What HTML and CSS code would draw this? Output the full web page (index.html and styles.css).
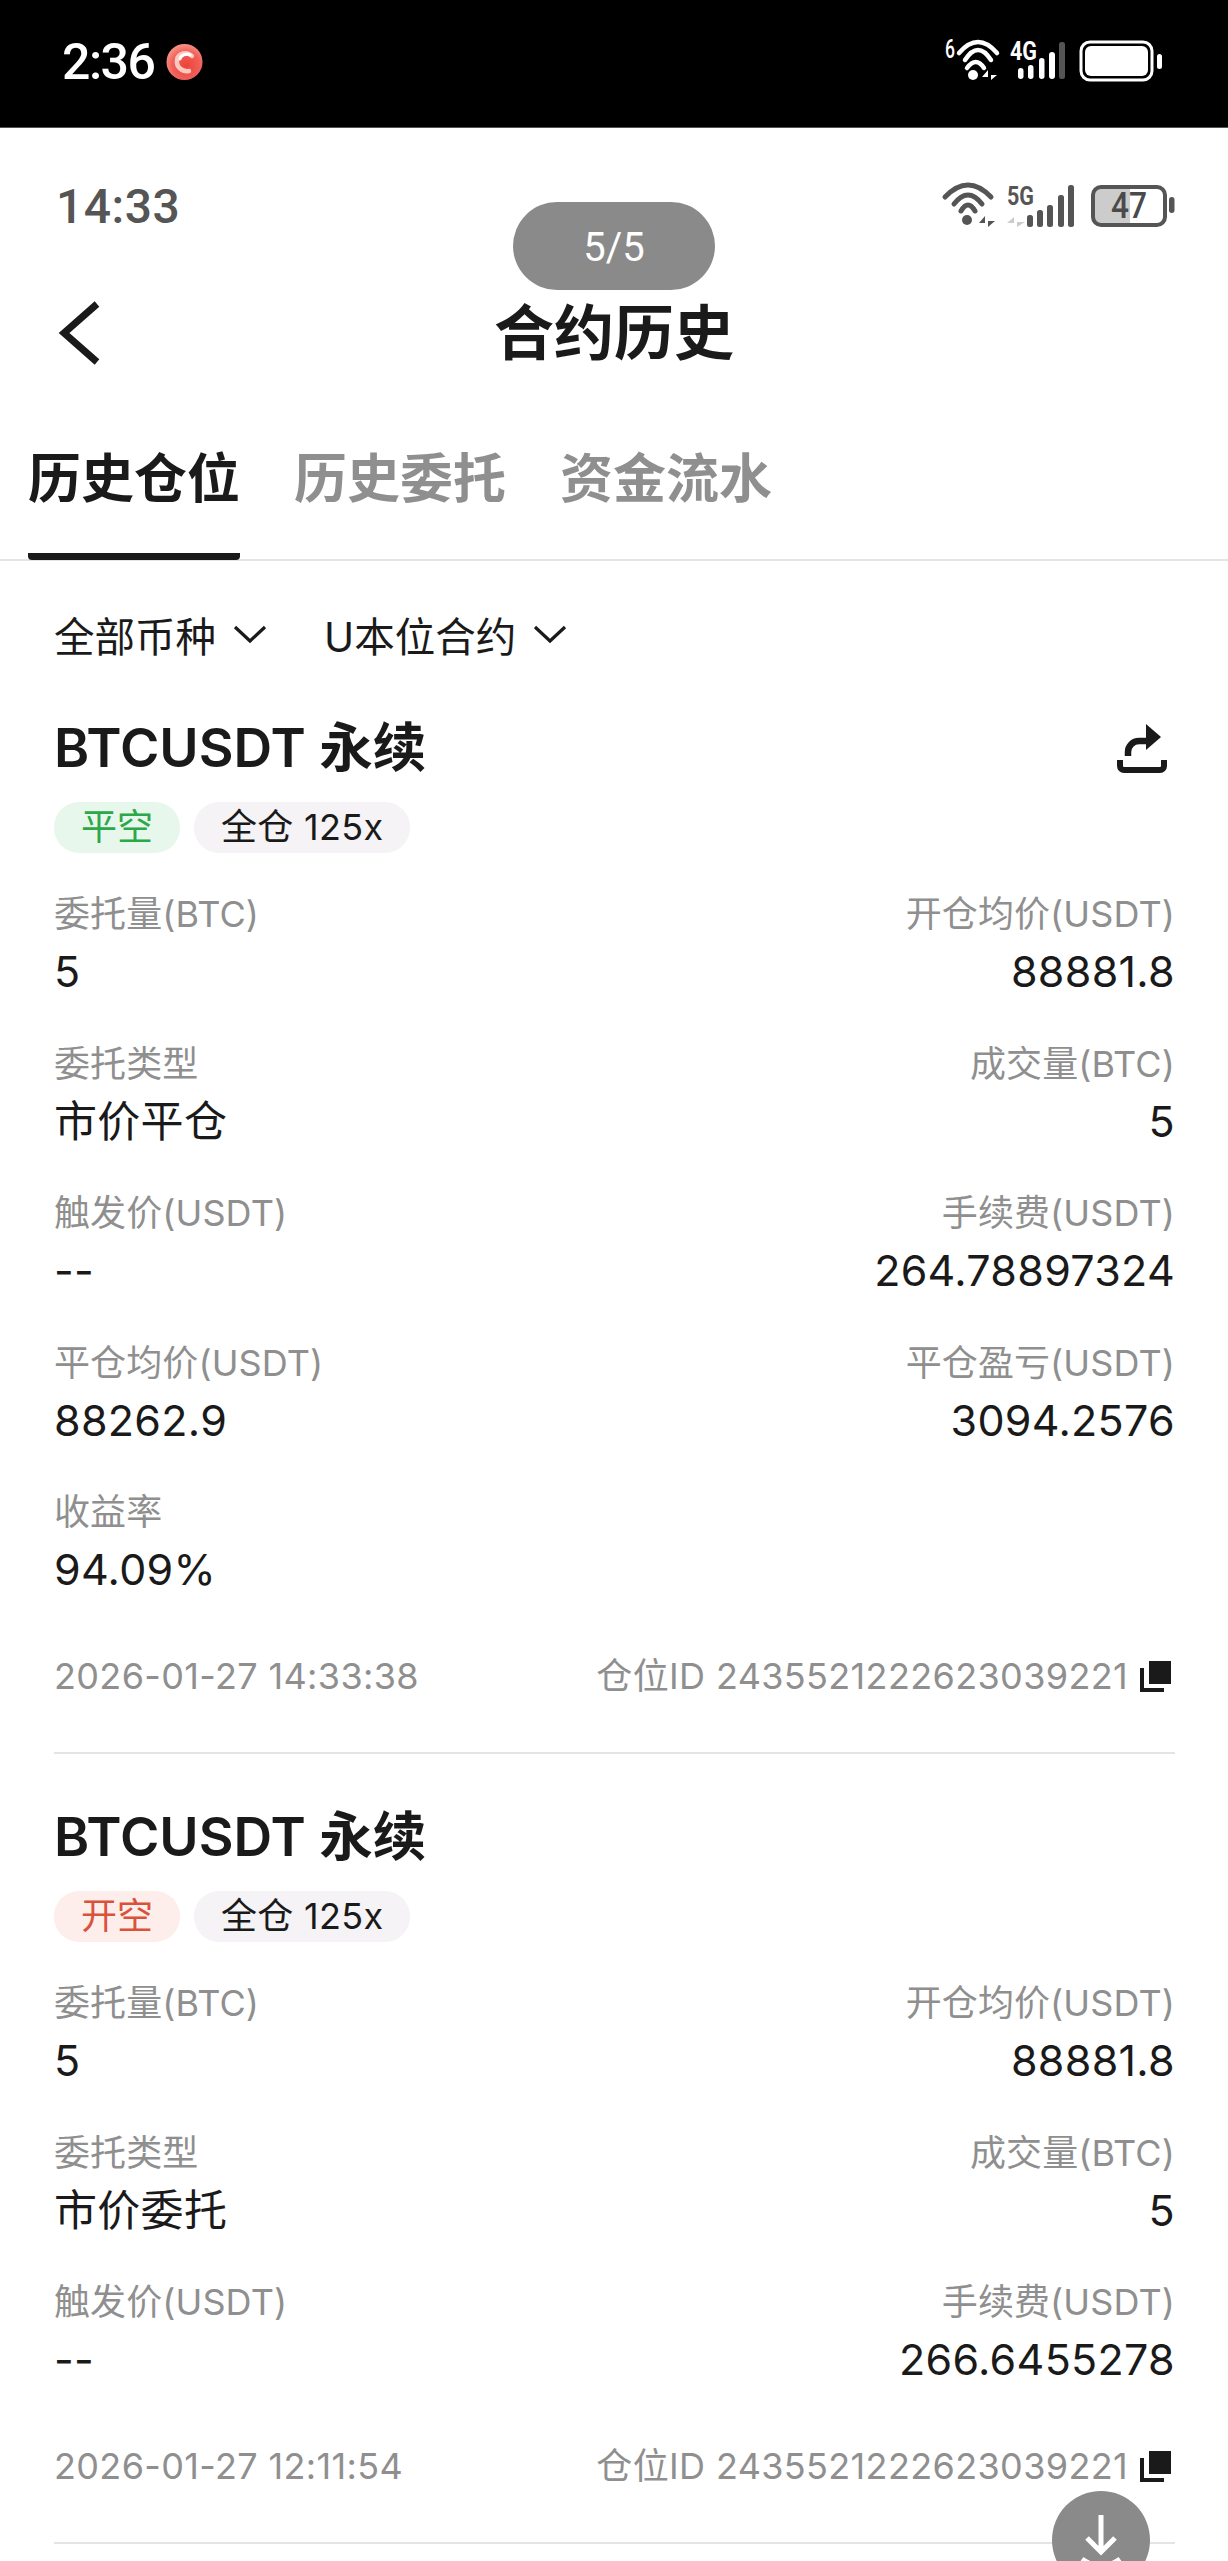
FILE: index.html
```html
<!DOCTYPE html>
<html lang="zh-CN">
<head>
    <meta charset="UTF-8">
    <meta name="viewport" content="width=device-width, initial-scale=1.0">
    <title>合约历史</title>
    <link rel="stylesheet" href="styles.css">
</head>
<body>
    <div class="phone">
        <!-- outer status bar -->
        <div class="sysbar">
            <div class="sysbar-left">
                <span class="sysbar-time">2:36</span>
                <svg class="rec-dot" width="37" height="36" viewBox="0 0 37 36">
                    <defs>
                        <radialGradient id="recFill" cx="0.55" cy="0.6" r="0.6">
                            <stop offset="0" stop-color="#ec4338"/>
                            <stop offset="0.65" stop-color="#f0605a"/>
                            <stop offset="1" stop-color="#f79484"/>
                        </radialGradient>
                    </defs>
                    <circle cx="18.5" cy="18" r="18" fill="url(#recFill)"/>
                    <path d="M26 12 C21 7 12 9 11 16 C10 23 16 28 23 27" fill="none" stroke="#fbc9c0" stroke-width="4.5" stroke-linecap="round"/>
                    <path d="M24 11 C20 9 15 11 14 15" fill="none" stroke="#fff" stroke-width="3" stroke-linecap="round"/>
                </svg>
            </div>
            <div class="sysbar-icons">
                <svg width="54" height="41" viewBox="0 0 54 41">
                    <text class="svg-narrow" x="0" y="18" font-size="25" font-weight="500" textLength="10" lengthAdjust="spacingAndGlyphs" fill="#fff">6</text>
                    <g fill="none" stroke="#fff" stroke-width="4.5" stroke-linecap="round">
                        <path d="M14 13 Q33 -9 52 13"/>
                        <path d="M20 20 Q33 0 46 20"/>
                        <path d="M22 28 Q31 16 39 28"/>
                    </g>
                    <circle cx="28" cy="35" r="5" fill="#fff"/>
                    <path d="M43 40 V30 L37 37 H43Z M46 30 V40 L52 35 H46Z" fill="#fff"/>
                </svg>
                <svg width="60" height="41" viewBox="0 0 60 41">
                    <text class="svg-narrow" x="1" y="20" font-size="25" font-weight="700" textLength="27" lengthAdjust="spacingAndGlyphs" fill="#fff">4G</text>
                    <rect x="9" y="28" width="5.5" height="11" rx="2.7" fill="#fff"/>
                    <rect x="19" y="25" width="5.5" height="14" rx="2.7" fill="#fff"/>
                    <rect x="30" y="18" width="5.5" height="21" rx="2.7" fill="#fff"/>
                    <rect x="40" y="12" width="6" height="27" rx="3" fill="#fff"/>
                    <rect x="50" y="2" width="6" height="37" rx="2.5" fill="#555"/>
                </svg>
                <svg width="84" height="42" viewBox="0 0 84 42">
                    <rect x="2" y="2" width="71" height="38" rx="9" fill="none" stroke="#fff" stroke-width="3"/>
                    <rect x="6" y="6" width="63" height="30" rx="6" fill="#fff"/>
                    <rect x="78" y="14" width="5" height="15" rx="2.5" fill="#fff"/>
                </svg>
            </div>
        </div>

        <!-- status bar inside the screenshot -->
        <div class="appbar">
            <span class="appbar-time">14:33</span>
            <div class="appbar-icons">
                <svg width="53" height="42" viewBox="0 0 53 42">
                    <g fill="none" stroke="#555" stroke-width="5" stroke-linecap="round">
                        <path d="M3 12 Q26 -12 49 12"/>
                        <path d="M12 19 Q26 1 40 19"/>
                        <path d="M19 26 Q26 14 33 26"/>
                    </g>
                    <circle cx="25" cy="35" r="5" fill="#555"/>
                    <path d="M43 42 V31 L37 38 H43Z M46 31 V42 L53 36 H46Z" fill="#555"/>
                </svg>
                <svg width="68" height="42" viewBox="0 0 68 42">
                    <text class="svg-narrow" x="1" y="20" font-size="26" font-weight="700" textLength="27" lengthAdjust="spacingAndGlyphs" fill="#555">5G</text>
                    <path d="M8 42 V32 L1 38 H8Z M11 32 V42 L19 37 H11Z" fill="#ccc"/>
                    <rect x="21" y="30" width="6" height="12" rx="2.5" fill="#555"/>
                    <rect x="31" y="25" width="6" height="17" rx="2.5" fill="#555"/>
                    <rect x="41" y="20" width="6" height="22" rx="2.5" fill="#555"/>
                    <rect x="52" y="10" width="6" height="32" rx="2.5" fill="#555"/>
                    <rect x="62" y="0" width="6" height="42" rx="2.5" fill="#555"/>
                </svg>
                <svg class="appbar-batt" width="84" height="42" viewBox="0 0 84 42">
                    <path d="M8 3 H39 V38 H8 A6 6 0 0 1 2 32 V9 A6 6 0 0 1 8 3Z" fill="#ccc"/>
                    <rect x="2" y="2" width="72" height="38" rx="8" fill="none" stroke="#555" stroke-width="4"/>
                    <rect x="78" y="12" width="5.5" height="16" rx="2.7" fill="#555"/>
                    <text class="svg-narrow" x="38" y="33" font-size="36" font-weight="500" text-anchor="middle" textLength="36" lengthAdjust="spacingAndGlyphs" fill="#4a4a4a">47</text>
                </svg>
            </div>
        </div>

        <div class="page-pill">5/5</div>

        <div class="nav">
            <svg class="nav-back" width="42" height="60" viewBox="0 0 42 60">
                <path d="M38 1 L5 30 L38 59" fill="none" stroke="#1a1a1a" stroke-width="7"/>
            </svg>
            <div class="nav-title">合约历史</div>
        </div>

        <div class="tabs">
            <div class="tab tab-active">历史仓位</div>
            <div class="tab">历史委托</div>
            <div class="tab">资金流水</div>
        </div>

        <div class="filters">
            <div class="filter">全部币种
                <svg width="34" height="20" viewBox="0 0 34 20"><path d="M2 3 L17 17 L32 3" fill="none" stroke="#1a1a1a" stroke-width="3.2"/></svg>
            </div>
            <div class="filter">U本位合约
                <svg width="34" height="20" viewBox="0 0 34 20"><path d="M2 3 L17 17 L32 3" fill="none" stroke="#1a1a1a" stroke-width="3.2"/></svg>
            </div>
        </div>

        <div class="card card-first">
            <div class="card-head">
                <div class="card-title">BTCUSDT 永续</div>
                <svg class="share" width="50" height="49" viewBox="0 0 50 49">
                    <path d="M11 32 V28 A11 11 0 0 1 22 17 H31" fill="none" stroke="#1a1a1a" stroke-width="6.5"/>
                    <path d="M29 0 L44 13 L29 26Z" fill="#1a1a1a"/>
                    <path d="M3 36 V42 A4 4 0 0 0 7 46 H43 A4 4 0 0 0 47 42 V36" fill="none" stroke="#1a1a1a" stroke-width="6"/>
                </svg>
            </div>
            <div class="tags">
                <span class="tag tag-green">平空</span>
                <span class="tag tag-gray">全仓 125x</span>
            </div>
            <div class="rows">
                <div class="row">
                    <div class="cell"><div class="label">委托量(BTC)</div><div class="value">5</div></div>
                    <div class="cell cell-right"><div class="label">开仓均价(USDT)</div><div class="value">88881.8</div></div>
                </div>
                <div class="row">
                    <div class="cell"><div class="label">委托类型</div><div class="value">市价平仓</div></div>
                    <div class="cell cell-right"><div class="label">成交量(BTC)</div><div class="value">5</div></div>
                </div>
                <div class="row">
                    <div class="cell"><div class="label">触发价(USDT)</div><div class="value">--</div></div>
                    <div class="cell cell-right"><div class="label">手续费(USDT)</div><div class="value">264.78897324</div></div>
                </div>
                <div class="row">
                    <div class="cell"><div class="label">平仓均价(USDT)</div><div class="value">88262.9</div></div>
                    <div class="cell cell-right"><div class="label">平仓盈亏(USDT)</div><div class="value">3094.2576</div></div>
                </div>
                <div class="row">
                    <div class="cell"><div class="label">收益率</div><div class="value">94.09%</div></div>
                </div>
            </div>
            <div class="foot">
                <span>2026-01-27 14:33:38</span>
                <span class="foot-id">仓位ID 2435521222623039221
                    <svg width="31" height="31" viewBox="0 0 31 31"><rect x="9" y="0" width="22" height="23" fill="#1a1a1a"/><path d="M2 7 V29 H24" fill="none" stroke="#1a1a1a" stroke-width="4"/></svg>
                </span>
            </div>
        </div>

        <div class="card">
            <div class="card-head">
                <div class="card-title">BTCUSDT 永续</div>
            </div>
            <div class="tags">
                <span class="tag tag-red">开空</span>
                <span class="tag tag-gray">全仓 125x</span>
            </div>
            <div class="rows">
                <div class="row">
                    <div class="cell"><div class="label">委托量(BTC)</div><div class="value">5</div></div>
                    <div class="cell cell-right"><div class="label">开仓均价(USDT)</div><div class="value">88881.8</div></div>
                </div>
                <div class="row">
                    <div class="cell"><div class="label">委托类型</div><div class="value">市价委托</div></div>
                    <div class="cell cell-right"><div class="label">成交量(BTC)</div><div class="value">5</div></div>
                </div>
                <div class="row">
                    <div class="cell"><div class="label">触发价(USDT)</div><div class="value">--</div></div>
                    <div class="cell cell-right"><div class="label">手续费(USDT)</div><div class="value">266.6455278</div></div>
                </div>
            </div>
            <div class="foot">
                <span>2026-01-27 12:11:54</span>
                <span class="foot-id">仓位ID 2435521222623039221
                    <svg width="31" height="31" viewBox="0 0 31 31"><rect x="9" y="0" width="22" height="23" fill="#1a1a1a"/><path d="M2 7 V29 H24" fill="none" stroke="#1a1a1a" stroke-width="4"/></svg>
                </span>
            </div>
        </div>

        <div class="fab">
            <svg width="98" height="98" viewBox="0 0 98 98">
                <path d="M49 24 V60 M35 47 L49 61 L63 47" fill="none" stroke="#fff" stroke-width="5"/>
                <path d="M30 68 Q49 82 68 68" fill="none" stroke="#fff" stroke-width="5"/>
            </svg>
        </div>
    </div>
</body>
</html>
```

FILE: styles.css
```css
* {
    box-sizing: border-box;
}

body {
    margin: 0;
    background: #fff;
    color: #1a1a1a;
    font-family: Inter, "Noto Sans CJK SC", sans-serif;
}

svg {
    overflow: visible;
    flex: none;
}

.phone {
    position: relative;
    width: 1228px;
    height: 2561px;
    overflow: hidden;
}

.svg-narrow {
    font-family: Roboto, sans-serif;
}

/* outer status bar */
.sysbar {
    height: 128px;
    background: #000;
    border-bottom: 1px solid #555;
    display: flex;
    justify-content: space-between;
    align-items: flex-start;
    padding: 40px 65px 0 62px;
}

.sysbar-left {
    display: flex;
    align-items: center;
    gap: 12px;
}

.sysbar-time {
    font-family: Roboto, sans-serif;
    font-weight: 500;
    font-size: 50px;
    line-height: 44px;
    letter-spacing: -1.5px;
    color: #fff;
}

.sysbar-icons {
    display: flex;
    align-items: flex-start;
    gap: 10px;
}

/* status bar of the captured app */
.appbar {
    height: 142px;
    display: flex;
    justify-content: space-between;
    align-items: flex-start;
    padding: 57px 53px 0 56px;
}

.appbar-time {
    font-family: Roboto, sans-serif;
    font-weight: 500;
    font-size: 48px;
    line-height: 44px;
    letter-spacing: 0.5px;
    color: #555;
}

.appbar-icons {
    display: flex;
    align-items: flex-start;
    gap: 11px;
}

.appbar-batt {
    margin-left: 6px;
}

.page-pill {
    position: absolute;
    top: 202px;
    left: 513px;
    width: 202px;
    height: 88px;
    padding-top: 2px;
    border-radius: 44px;
    background: #8a8a8a;
    color: #fff;
    font-family: Roboto, sans-serif;
    font-size: 40px;
    display: flex;
    align-items: center;
    justify-content: center;
}

.nav {
    position: relative;
    height: 122px;
    padding-bottom: 6px;
    display: flex;
    align-items: center;
    justify-content: center;
}

.nav-back {
    position: absolute;
    left: 59px;
    top: 33px;
}

.nav-title {
    font-size: 60px;
    font-weight: 700;
}

.tabs {
    display: flex;
    gap: 54px;
    padding: 0 28px;
    border-bottom: 2px solid #e4e4e4;
    height: 169px;
    align-items: flex-end;
}

.tab {
    font-size: 53px;
    font-weight: 700;
    line-height: 72px;
    color: #8f8f8f;
    padding-bottom: 38px;
    border-bottom: 7px solid transparent;
    border-radius: 4px;
    margin-bottom: -1px;
}

.tab-active {
    color: #1a1a1a;
    border-bottom-color: #1a1a1a;
}

.filters {
    height: 152px;
    padding: 0 54px 6px;
    display: flex;
    align-items: center;
    gap: 57px;
}

.filter {
    font-size: 40.5px;
    display: flex;
    align-items: center;
    gap: 17px;
}

.card {
    margin: 0 53px 0 54px;
    padding: 48px 0 51px;
    border-bottom: 2px solid #e4e4e4;
}

.card-first {
    padding-top: 0;
}

.card-head {
    display: flex;
    justify-content: space-between;
    align-items: center;
    height: 70px;
}

.card-title {
    font-size: 53.5px;
    font-weight: 600;
    line-height: 70px;
}

.share {
    margin-right: 8px;
}

.tags {
    display: flex;
    gap: 14px;
    margin-top: 19px;
}

.tag {
    height: 51px;
    padding: 0 27px;
    border-radius: 25px;
    font-size: 36px;
    line-height: 50px;
}

.tag-green {
    background: #e8f7ec;
    color: #2ba84a;
}

.tag-red {
    background: #fdeeec;
    color: #d9533b;
}

.tag-gray {
    background: #f5f3f5;
    color: #1a1a1a;
    letter-spacing: 0.3px;
}

.rows {
    display: flex;
    flex-direction: column;
    gap: 35.5px;
    margin-top: 36px;
}

.row {
    display: flex;
    justify-content: space-between;
}

.cell-right {
    text-align: right;
}

.label {
    font-size: 36px;
    line-height: 50px;
    letter-spacing: 0.1px;
    color: #8f8f8f;
}

.value {
    font-size: 43px;
    line-height: 64px;
    letter-spacing: 0.3px;
    color: #1a1a1a;
}

.foot {
    display: flex;
    justify-content: space-between;
    align-items: center;
    margin-top: 50px;
    font-size: 36px;
    line-height: 50px;
    letter-spacing: 0.35px;
    color: #8f8f8f;
}

.foot-id {
    display: flex;
    align-items: center;
    gap: 12px;
    margin-right: 4px;
}

.fab {
    position: absolute;
    left: 1052px;
    top: 2491px;
    width: 98px;
    height: 98px;
    border-radius: 50%;
    background: #8a8a8a;
}
```
